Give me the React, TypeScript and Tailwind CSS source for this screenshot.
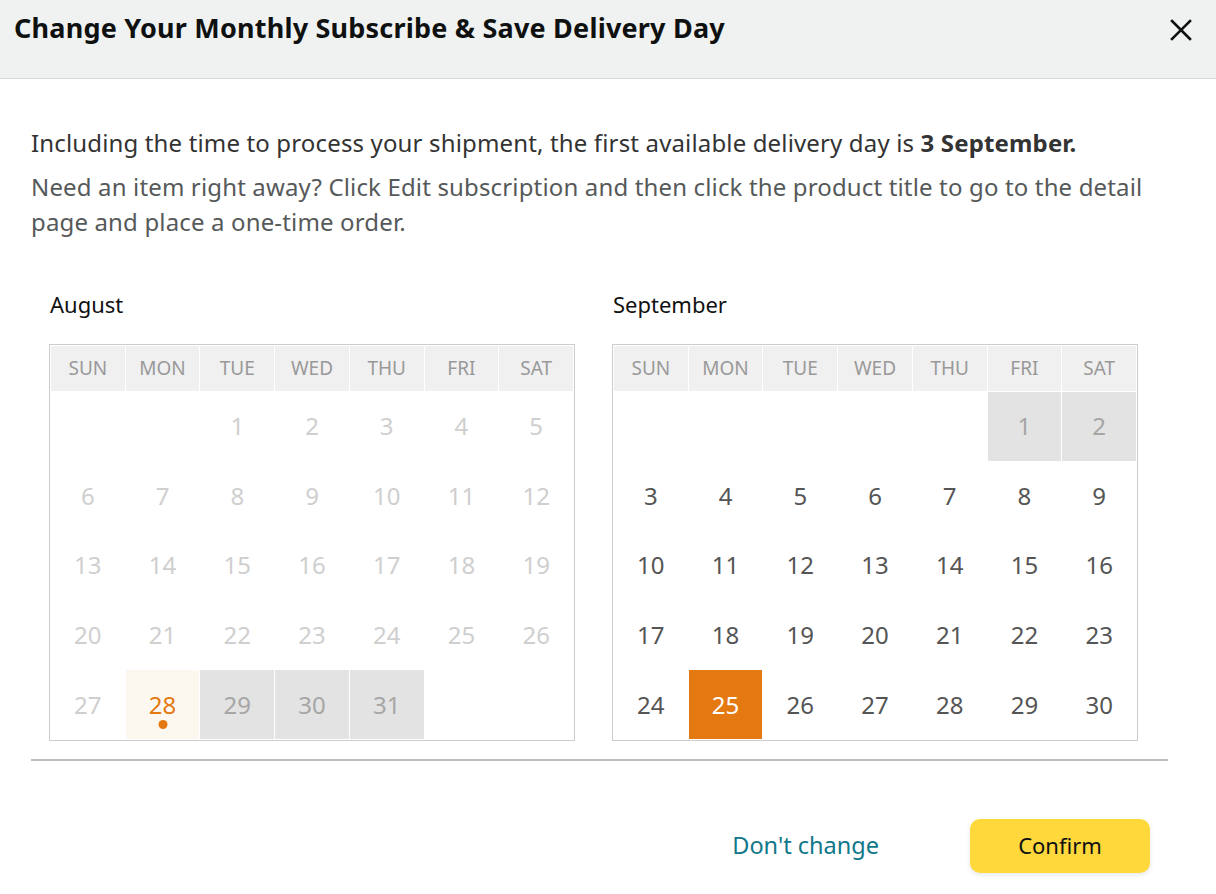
import React from "react";

const DOW = ["SUN", "MON", "TUE", "WED", "THU", "FRI", "SAT"];

type Cell = { d?: number; kind?: "disabled" | "shaded" | "today" | "normal" | "selected" };

function Calendar({ title, cells }: { title: string; cells: Cell[] }) {
  return (
    <div className="flex flex-col">
      <div className="text-[22px] text-[#111] h-[30px] leading-[30px] pl-[1px] mb-[25px]">{title}</div>
      <div className="border border-[#cccccc] p-px grid grid-cols-7 gap-px bg-white">
        {DOW.map((d) => (
          <div key={d} className="h-[45px] bg-[#f0f0f0] flex items-center justify-center text-[19px] text-[#999]">
            {d}
          </div>
        ))}
        {cells.map((c, i) => {
          let cls = "h-[68.6px] flex items-center justify-center text-[24px] relative ";
          if (c.kind === "disabled") cls += "text-[#cfcfcf]";
          else if (c.kind === "shaded") cls += "bg-[#e3e3e3] text-[#a6a6a6]";
          else if (c.kind === "today") cls += "bg-[#fdf8ef] text-[#e47911]";
          else if (c.kind === "selected") cls += "bg-[#e47911] text-white";
          else cls += "text-[#555]";
          return (
            <div key={i} className={cls}>
              {c.d ?? ""}
              {c.kind === "today" && (
                <span className="absolute left-1/2 -translate-x-1/2 bottom-[10px] w-[9px] h-[9px] rounded-full bg-[#e47911]" />
              )}
            </div>
          );
        })}
      </div>
    </div>
  );
}

export default function App() {
  const aug: Cell[] = [{}, {}];
  for (let d = 1; d <= 31; d++) {
    let kind: Cell["kind"] = "disabled";
    if (d === 28) kind = "today";
    else if (d >= 29) kind = "shaded";
    aug.push({ d, kind });
  }
  aug.push({}, {});
  const sep: Cell[] = [{}, {}, {}, {}, {}];
  for (let d = 1; d <= 30; d++) {
    let kind: Cell["kind"] = "normal";
    if (d <= 2) kind = "shaded";
    else if (d === 25) kind = "selected";
    sep.push({ d, kind });
  }

  return (
    <div className="w-[1216px] h-[894px] bg-white overflow-hidden" style={{ fontFamily: '"Noto Sans", "Open Sans", sans-serif' }}>
      <div className="h-[79px] bg-[#f0f2f2] border-b border-[#d5d9d9] flex items-start justify-between pl-[14px] pr-[22px] pt-[9px]">
        <h1 className="text-[27px] font-bold text-[#0f1111] leading-[38px] tracking-[0.2px]">
          Change Your Monthly Subscribe &amp; Save Delivery Day
        </h1>
        <button className="mt-[8px] w-[26px] h-[26px] flex items-center justify-center text-[#0f1111]">
          <svg width="24" height="24" viewBox="0 0 24 24" fill="none" stroke="currentColor" strokeWidth="2.6" strokeLinecap="square">
            <path d="M3 3 L21 21 M21 3 L3 21" />
          </svg>
        </button>
      </div>
      <div className="pl-[31px] pr-[48px] pt-[46px]">
        <p className="text-[24px] text-[#333] leading-[36px] tracking-[0.15px]">
          Including the time to process your shipment, the first available delivery day is <span className="font-bold">3 September.</span>
        </p>
        <p className="text-[24px] text-[#565959] leading-[35px] mt-[8px] tracking-[0.15px]">
          Need an item right away? Click Edit subscription and then click the product title to go to the detail page and place a one-time order.
        </p>
        <div className="flex gap-[37px] pl-[18px] mt-[50px]">
          <div className="w-[526px]">
            <Calendar title="August" cells={aug} />
          </div>
          <div className="w-[526px]">
            <Calendar title="September" cells={sep} />
          </div>
        </div>
        <div className="h-[2px] bg-[#bbbfbf] mt-[18px]" />
        <div className="flex justify-end items-center pr-[18px] mt-[58px] gap-[91px]">
          <button className="text-[23.5px] text-[#11788a]">Don't change</button>
          <button className="w-[180px] h-[54px] rounded-[10px] bg-[#ffd83c] text-[22px] text-[#0f1111] shadow-[0_2px_5px_rgba(213,217,217,0.6)]">
            Confirm
          </button>
        </div>
      </div>
    </div>
  );
}
